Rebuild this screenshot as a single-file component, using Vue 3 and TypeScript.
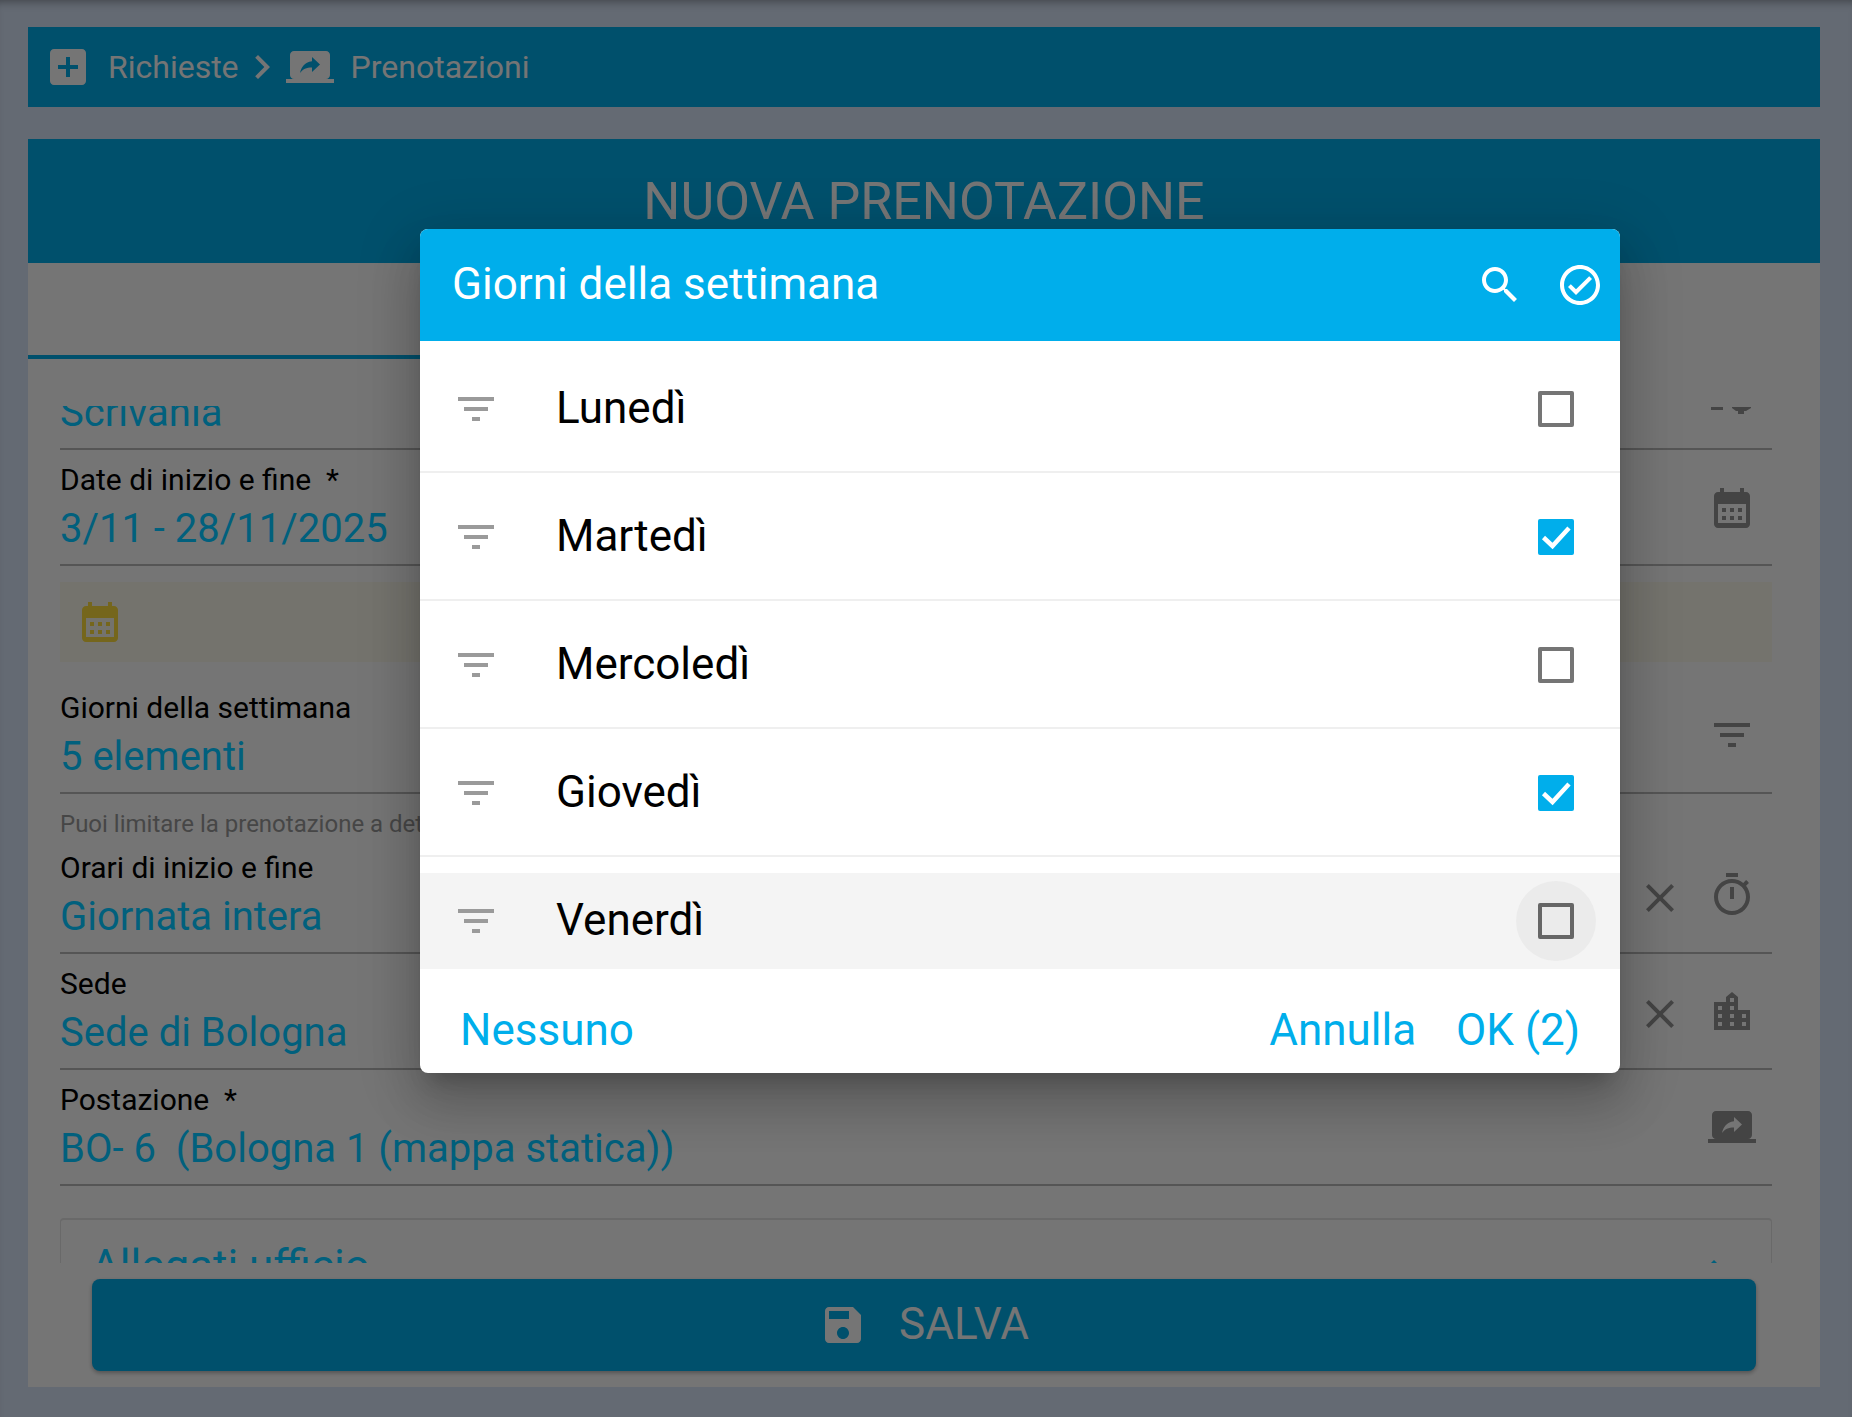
<template>
  <div class="page">
    <div class="breadcrumb">
      <svg class="ico48" viewBox="0 0 24 24"><path :d="icons.addBox" /></svg>
      <span class="crumb crumb-first">Richieste</span>
      <svg class="ico48 chevron" viewBox="0 0 24 24"><path :d="icons.chevron" /></svg>
      <svg class="ico48" viewBox="0 0 24 24"><path :d="icons.screenShare" /></svg>
      <span class="crumb crumb-last">Prenotazioni</span>
    </div>

    <main class="panel">
      <h1 class="title">NUOVA PRENOTAZIONE</h1>
      <div class="tabs"><span class="tab-line"></span></div>

      <div class="scroller">
        <div class="field field-cut">
          <div class="value">Scrivania</div>
          <svg class="cut-icon" viewBox="0 0 40 8"><path d="M0 0h12v3H0zM21 0h19v1l-5 3h-2v3h-6V4h-2l-4-3z" /></svg>
        </div>

        <div class="field">
          <div class="field-inner">
            <div class="label">Date di inizio e fine &nbsp;*</div>
            <div class="value">3/11 - 28/11/2025</div>
          </div>
          <svg class="field-icon calendar" viewBox="0 0 36 40"><path fill-rule="evenodd" :d="icons.calendar" /></svg>
        </div>

        <div class="banner">
          <svg class="calendar" viewBox="0 0 36 40"><path fill-rule="evenodd" :d="icons.calendar" /></svg>
        </div>

        <div class="field field-days">
          <div class="field-inner">
            <div class="label">Giorni della settimana</div>
            <div class="value">5 elementi</div>
          </div>
          <svg class="ico48 field-icon" viewBox="0 0 24 24"><path :d="icons.filter" /></svg>
        </div>
        <div class="hint">Puoi limitare la prenotazione a det</div>

        <div class="field">
          <div class="field-inner">
            <div class="label">Orari di inizio e fine</div>
            <div class="value">Giornata intera</div>
          </div>
          <svg class="ico48 field-clear" viewBox="0 0 24 24"><path :d="icons.close" /></svg>
          <svg class="ico48 field-icon" viewBox="0 0 24 24"><path :d="icons.timer" /></svg>
        </div>

        <div class="field">
          <div class="field-inner">
            <div class="label">Sede</div>
            <div class="value">Sede di Bologna</div>
          </div>
          <svg class="ico48 field-clear" viewBox="0 0 24 24"><path :d="icons.close" /></svg>
          <svg class="field-icon building" viewBox="0 0 36 38"><path fill-rule="evenodd" :d="icons.building" /></svg>
        </div>

        <div class="field">
          <div class="field-inner">
            <div class="label">Postazione &nbsp;*</div>
            <div class="value">BO- 6 &nbsp;(Bologna 1 (mappa statica))</div>
          </div>
          <svg class="ico48 field-icon" viewBox="0 0 24 24"><path :d="icons.screenShare" /></svg>
        </div>

        <div class="accordion">
          <span class="accordion-title">Allegati ufficio</span>
          <svg class="ico48 caret" viewBox="0 0 24 24"><path d="M7 14l5-5 5 5z" /></svg>
        </div>
      </div>

      <button class="save">
        <svg class="ico48" viewBox="0 0 24 24"><path :d="icons.save" /></svg>
        <span class="save-text">SALVA</span>
      </button>
    </main>

    <div class="backdrop"></div>

    <section class="dialog">
      <header class="dialog-head">
        <span class="dialog-title">Giorni della settimana</span>
        <svg class="ico48 head-search" viewBox="0 0 24 24"><path :d="icons.search" /></svg>
        <svg class="ico48" viewBox="0 0 24 24"><path :d="icons.checkCircle" /></svg>
      </header>

      <ul class="days">
        <li v-for="day in days" :key="day.name" class="day">
          <div class="day-inner" :class="{ hovered: day.hover }">
            <svg class="ico48 day-icon" viewBox="0 0 24 24"><path :d="icons.filter" /></svg>
            <span class="day-name">{{ day.name }}</span>
            <span class="check-wrap" :class="{ hovered: day.hover }">
              <span class="check" :class="{ checked: day.checked }">
                <svg v-if="day.checked" viewBox="0 0 36 36"><path d="M5.5 18.5l9 8.5L31 9" /></svg>
              </span>
            </span>
          </div>
        </li>
      </ul>

      <footer class="dialog-foot">
        <span class="action">Nessuno</span>
        <span class="action action-right">Annulla</span>
        <span class="action">OK (2)</span>
      </footer>
    </section>
  </div>
</template>

<script setup lang="ts">
const icons = {
  addBox: 'M19 3H5c-1.11 0-2 .9-2 2v14c0 1.1.89 2 2 2h14c1.1 0 2-.9 2-2V5c0-1.1-.9-2-2-2zm-2 10h-4v4h-2v-4H7v-2h4V7h2v4h4v2z',
  chevron: 'M8.59 16.59L13.17 12 8.59 7.41 10 6l6 6-6 6z',
  screenShare: 'M20 18c1.1 0 1.99-.9 1.99-2L22 6c0-1.11-.9-2-2-2H4c-1.11 0-2 .89-2 2v10c0 1.1.89 2 2 2H0v2h24v-2h-4zm-7-3.53v-2.19c-2.78 0-4.61.85-6 2.72.56-2.67 2.11-5.33 6-5.9V7l4 3.73-4 3.74z',
  filter: 'M10 18h4v-2h-4v2zM3 6v2h18V6H3zm3 7h12v-2H6v2z',
  close: 'M19 6.41L17.59 5 12 10.59 6.41 5 5 6.41 10.59 12 5 17.59 6.41 19 12 13.41 17.59 19 19 17.59 13.41 12z',
  timer: 'M15 1H9v2h6V1zm-4 13h2V8h-2v6zm8.03-6.61l1.42-1.42c-.43-.51-.9-.99-1.41-1.41l-1.42 1.42C16.07 4.74 14.12 4 12 4c-4.97 0-9 4.03-9 9s4.02 9 9 9 9-4.03 9-9c0-2.12-.74-4.07-1.97-5.61zM12 20c-3.87 0-7-3.13-7-7s3.13-7 7-7 7 3.13 7 7-3.13 7-7 7z',
  building: 'M0 10h12V5l6-5 6 5v13h12v20H0zM4 14v4h4v-4zM4 22v4h4v-4zM4 30v4h4v-4zM16 6v4h4V6zM16 14v4h4v-4zM16 22v4h4v-4zM16 30v4h4v-4zM28 22v4h4v-4zM28 30v4h4v-4z',
  save: 'M17 3H5c-1.11 0-2 .9-2 2v14c0 1.1.89 2 2 2h14c1.1 0 2-.9 2-2V7l-4-4zm-5 16c-1.66 0-3-1.34-3-3s1.34-3 3-3 3 1.34 3 3-1.34 3-3 3zm3-10H5V5h10v4z',
  search: 'M15.5 14h-.79l-.28-.27C15.41 12.59 16 11.11 16 9.5 16 5.91 13.09 3 9.5 3S3 5.91 3 9.5 5.91 16 9.5 16c1.61 0 3.09-.59 4.23-1.57l.27.28v.79l5 4.99L20.49 19l-4.99-5zm-6 0C7.01 14 5 11.99 5 9.5S7.01 5 9.5 5 14 7.01 14 9.5 11.99 14 9.5 14z',
  checkCircle: 'M12 2C6.48 2 2 6.48 2 12s4.48 10 10 10 10-4.48 10-10S17.52 2 12 2zm0 18c-4.41 0-8-3.59-8-8s3.59-8 8-8 8 3.59 8 8-3.59 8-8 8zm4.59-12.42L10 14.17l-2.59-2.58L6 13l4 4 8-8z',
  calendar: 'M6 0h4v4h16V0h4v4h2c2.2 0 4 1.8 4 4v28c0 2.2-1.8 4-4 4H4c-2.2 0-4-1.8-4-4V8c0-2.2 1.8-4 4-4h2V0zM4 16v19h28V16H4zM8 20v4h4v-4H8zm8 0v4h4v-4h-4zm8 0v4h4v-4h-4zM8 28v4h4v-4H8zm8 0v4h4v-4h-4zm8 0v4h4v-4h-4z'
}

const days = [
  { name: 'Lunedì', checked: false, hover: false },
  { name: 'Martedì', checked: true, hover: false },
  { name: 'Mercoledì', checked: false, hover: false },
  { name: 'Giovedì', checked: true, hover: false },
  { name: 'Venerdì', checked: false, hover: true }
]
</script>

<style scoped>
* {
  box-sizing: border-box;
}

.page {
  position: relative;
  height: 1417px;
  padding: 27px 32px 30px 28px;
  display: flex;
  flex-direction: column;
  overflow: hidden;
  background: #d9e8fa;
  font-family: Roboto, "Liberation Sans", sans-serif;
}

.ico48 {
  width: 48px;
  height: 48px;
  flex: none;
  fill: currentColor;
  display: block;
}

.breadcrumb {
  height: 80px;
  flex: none;
  display: flex;
  align-items: center;
  padding-left: 16px;
  background: #00aeeb;
  color: #fff;
}

.crumb {
  font-size: 32px;
}

.crumb-first {
  margin-left: 16px;
  margin-right: -1px;
}

.crumb-last {
  margin-left: 17px;
}

.panel {
  flex: 1;
  min-height: 0;
  margin-top: 32px;
  display: flex;
  flex-direction: column;
  background: #fff;
}

.title {
  height: 124px;
  flex: none;
  margin: 0;
  background: #00aeeb;
  color: #fff;
  font-size: 52px;
  font-weight: 400;
  line-height: 126px;
  text-align: center;
}

.tabs {
  height: 96px;
  flex: none;
}

.tab-line {
  display: block;
  width: 440px;
  height: 4px;
  margin-top: 92px;
  background: #00aeeb;
}

.scroller {
  height: 857px;
  flex: none;
  margin-top: 47px;
  padding: 0 48px 0 32px;
  overflow: hidden;
}

.field {
  height: 116px;
  display: flex;
  align-items: center;
  border-bottom: 2px solid #b9b9b9;
}

.field-inner {
  flex: 1;
  min-width: 0;
  align-self: flex-start;
  padding-top: 12px;
}

.field-cut {
  height: 44px;
  justify-content: space-between;
  align-items: flex-start;
  overflow: hidden;
}

.field-cut .value {
  margin-top: -17px;
}

.cut-icon {
  width: 40px;
  height: 8px;
  flex: none;
  margin: 1px 21px 0 0;
  fill: #949494;
}

.field-icon {
  color: #949494;
  fill: currentColor;
  margin-right: 22px;
}

.calendar {
  width: 36px;
  height: 40px;
  flex: none;
  display: block;
  fill: currentColor;
}

.field > .calendar {
  margin-top: 2px;
}

.building {
  width: 36px;
  height: 38px;
  flex: none;
  margin-left: 6px;
}

.ico48.field-icon {
  margin-right: 16px;
}

.field-clear {
  color: #949494;
  margin: 6px 24px 0 0;
}

.label {
  margin-bottom: 7px;
  font-size: 30px;
  line-height: 36px;
  color: #000;
}

.value,
.accordion-title,
.caret {
  position: relative;
  z-index: 2;
  color: #01607d;
}

.value {
  font-size: 40px;
  line-height: 48px;
  white-space: nowrap;
}

.banner {
  height: 80px;
  margin-top: 16px;
  padding-left: 22px;
  display: flex;
  align-items: center;
  background: #fdfbee;
  color: #ffde3d;
}

.field-days {
  margin-top: 16px;
}

.hint {
  height: 30px;
  margin-top: 14px;
  font-size: 24px;
  line-height: 32px;
  color: #9a9a9a;
  white-space: nowrap;
}

.accordion {
  height: 120px;
  margin-top: 32px;
  padding: 22px 0 0 30px;
  display: flex;
  justify-content: space-between;
  border: 1px solid #e4e4e4;
  border-top-width: 2px;
  border-radius: 4px;
  font-size: 44px;
  line-height: 48px;
}

.caret {
  margin-right: 33px;
  margin-top: 0;
}

.save {
  height: 92px;
  flex: none;
  margin: 16px 64px 0;
  display: flex;
  align-items: center;
  justify-content: center;
  gap: 32px;
  border: 0;
  border-radius: 8px;
  background: #00aeeb;
  color: #fff;
  font: 400 44px Roboto, sans-serif;
  box-shadow: 0 2px 4px rgba(0, 0, 0, 0.3);
}

.save-text {
  margin-top: -2px;
}

.backdrop {
  position: absolute;
  inset: 0;
  z-index: 1;
  background: rgba(0, 0, 0, 0.54);
  box-shadow: inset 0 8px 8px -6px rgba(0, 0, 0, 0.35);
}

.dialog {
  position: absolute;
  z-index: 3;
  left: 420px;
  top: 229px;
  width: 1200px;
  height: 844px;
  display: flex;
  flex-direction: column;
  background: #fff;
  border-radius: 8px;
  overflow: hidden;
  box-shadow: 0 16px 20px -10px rgba(0, 0, 0, 0.2), 0 32px 48px 4px rgba(0, 0, 0, 0.14), 0 12px 60px 10px rgba(0, 0, 0, 0.12);
}

.dialog-head {
  height: 112px;
  flex: none;
  display: flex;
  align-items: center;
  padding: 0 16px 0 32px;
  background: #00aeeb;
  color: #fff;
}

.dialog-title {
  flex: 1;
  font-size: 44px;
  margin-top: -2px;
}

.head-search {
  margin-right: 32px;
}

.days {
  height: 628px;
  flex: none;
  margin: 0;
  padding: 4px 0 0;
  list-style: none;
  overflow: hidden;
}

.day {
  height: 128px;
  padding: 16px 0 14px;
  border-bottom: 2px solid #efefef;
}

.day-inner {
  height: 96px;
  display: flex;
  align-items: center;
  padding: 0 24px 0 32px;
}

.day-inner.hovered {
  background: #f4f4f4;
}

.day-name {
  flex: 1;
  margin: -2px 0 0 56px;
  font-size: 44px;
  color: #000;
}

.day-icon {
  color: #9a9a9a;
}

.check-wrap {
  width: 80px;
  height: 80px;
  flex: none;
  display: flex;
  align-items: center;
  justify-content: center;
  border-radius: 50%;
}

.check-wrap.hovered {
  background: #ebebeb;
}

.check {
  width: 36px;
  height: 36px;
  display: block;
  border: 4px solid #757575;
  border-radius: 2px;
}

.check-wrap.hovered .check {
  border-color: #666;
}

.check.checked {
  border: 0;
  background: #00aeeb;
}

.check svg {
  display: block;
  width: 36px;
  height: 36px;
  fill: none;
  stroke: #fff;
  stroke-width: 4.5;
}

.dialog-foot {
  flex: 1;
  display: flex;
  align-items: center;
  padding: 18px 40px 0;
  gap: 40px;
}

.action {
  font-size: 44px;
  color: #00aeeb;
}

.action-right {
  margin-left: auto;
}
</style>
